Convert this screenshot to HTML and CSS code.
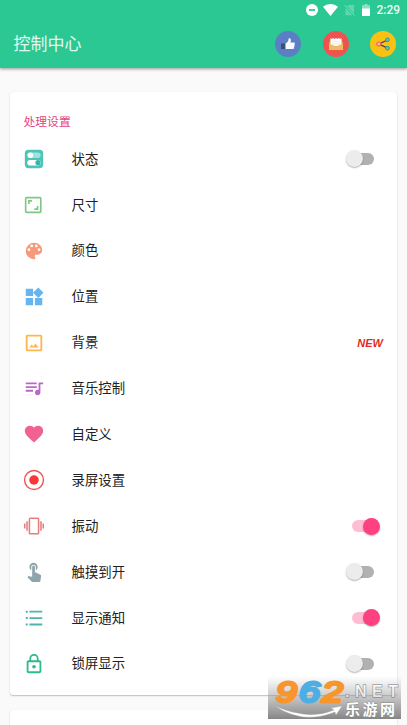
FILE: index.html
```html
<!DOCTYPE html>
<html lang="zh-CN">
<head>
<meta charset="utf-8">
<title>控制中心</title>
<link rel="stylesheet" href="styles.css">
</head>
<body>
<header class="appbar">
  <div class="status">
    <svg class="st-dnd" viewBox="0 0 12 12"><circle cx="6" cy="6" r="6" fill="#fff"/><path d="M3 5.100h6v1.800H3z" fill="#2cc893"/></svg>
    <svg class="st-wifi" viewBox="0 0 15 12"><path d="M7.500 12 0 2.700Q3.200 0 7.500 0T15 2.700z" fill="#fff"/></svg>
    <svg class="st-sim" viewBox="0 0 11 12"><path d="M4.500 1H10v8.500L3.300 2.200zM1.500 4l6.800 7.200H1.500z" fill="#62d5ae"/><path d="M.5 1l10 10.500" stroke="#7adfbd"/></svg>
    <svg class="st-bat" viewBox="0 0 8 12"><path d="M0 1.200h2.500V0h3v1.200H8V5H0z" fill="#8be2c5"/><path d="M0 4.500h8V12H0z" fill="#fff"/></svg>
    <span class="clock">2:29</span>
  </div>
  <div class="toolbar">
    <h1 class="title">控制中心</h1>
    <div class="actions">
      <span class="action like"><svg viewBox="0 0 26 26"><path d="M6 12.500h4.500V18H6z" fill="#3b4d78"/><path d="M10.500 12.500c2.300-1.100 3-2.700 3.200-5.200 2.700-.4 2.400 2.600 1.700 4.300h3.700c1 .3.900 1.300.4 1.700.5.700.3 1.300-.2 1.600.3.700 0 1.200-.4 1.500.2 1-.3 1.600-1.300 1.600h-7.100z" fill="#f7fafc"/></svg></span>
      <span class="action mail"><svg viewBox="0 0 26 26"><path d="M6 11l2-3h10l2 3v8H6z" fill="#d99d47"/><path d="M7.500 7l1.300 1 1.400-1 1.400 1L13 7l1.400 1 1.400-1 1.400 1 1.300-1v8h-11z" fill="#fff"/><path d="M9 11h8M9 13h8" stroke="#ead8cf" stroke-width=".6"/><path d="M6 12.500l7 3 7-3V19H6z" fill="#edbc62"/></svg></span>
      <span class="action share"><svg viewBox="0 0 26 26"><path d="M17.500 9L9 13l8.500 4.200" fill="none" stroke="#39464b" stroke-width="1.300"/><circle cx="8.800" cy="13" r="2" fill="#ffb6a0" stroke="#ed6560" stroke-width="1.200"/><circle cx="17.500" cy="8.800" r="1.900" fill="#65bdb1" stroke="#31989a"/><circle cx="17.500" cy="17.200" r="1.900" fill="#65bdb1" stroke="#31989a"/></svg></span>
    </div>
  </div>
</header>
<main class="content">
  <section class="card">
    <h2 class="heading">处理设置</h2>
    <ul class="list">
      <li class="row"><svg class="icon" viewBox="0 0 24 24"><rect x="2" y="2" width="20" height="20" rx="4" fill="#4fc3b8"/><rect x="4.700" y="5" width="14.600" height="6" rx="3" fill="#9ee2dc"/><circle cx="8" cy="8" r="3" fill="#fff"/><rect x="4.700" y="13" width="14.600" height="6" rx="3" fill="#fff"/><circle cx="16.300" cy="16" r="2.800" fill="#36b5ad"/></svg><span class="label">状态</span><span class="switch"></span></li>
      <li class="row"><svg class="icon left" viewBox="0 0 24 24" fill="none" stroke="#81c784" stroke-width="1.800"><rect x="4" y="4" width="16.500" height="16" rx="1"/><path d="M7.500 11V7.500H11M17 13v3.500h-3.500"/></svg><span class="label">尺寸</span></li>
      <li class="row"><svg class="icon" viewBox="0 0 24 24" fill="#f79a7b"><path d="M12 3a9 9 0 0 0 0 18c.830 0 1.500-.670 1.500-1.500 0-.390-.150-.740-.390-1.010-.230-.260-.380-.610-.380-.990 0-.830.670-1.500 1.500-1.500H16c2.760 0 5-2.240 5-5C21 6.580 16.970 3 12 3zm-5.500 9a1.500 1.500 0 1 1 0-3 1.500 1.500 0 0 1 0 3zm3-4a1.500 1.500 0 1 1 0-3 1.500 1.500 0 0 1 0 3zm5 0a1.500 1.500 0 1 1 0-3 1.500 1.500 0 0 1 0 3zm3 4a1.500 1.500 0 1 1 0-3 1.500 1.500 0 0 1 0 3z"/></svg><span class="label">颜色</span></li>
      <li class="row"><svg class="icon" viewBox="0 0 24 24" fill="#64b5f0"><path d="M13 13v8h8v-8h-8zM3 21h8v-8H3v8zM3 3v8h8V3H3zm13.660-1.310L11 7.340 16.660 13l5.660-5.660-5.660-5.650z"/></svg><span class="label">位置</span></li>
      <li class="row"><svg class="icon" viewBox="0 0 24 24" fill="#ffb74d"><path d="M19 5v14H5V5h14m0-2H5c-1.100 0-2 .9-2 2v14c0 1.100.9 2 2 2h14c1.100 0 2-.9 2-2V5c0-1.100-.9-2-2-2z"/><path d="M7 17l2.500-3.300 1.700 2 2.500-3.200L17 17z"/></svg><span class="label">背景</span><span class="new">NEW</span></li>
      <li class="row"><svg class="icon" viewBox="0 0 24 24" fill="#ba68c8"><path d="M15 6H3v2h12V6zm0 4H3v2h12v-2zM3 16h8v-2H3v2zM17 6v8.180c-.310-.110-.650-.180-1-.180-1.660 0-3 1.340-3 3s1.340 3 3 3 3-1.340 3-3V8h3V6h-5z"/></svg><span class="label">音乐控制</span></li>
      <li class="row"><svg class="icon" viewBox="0 0 24 24" fill="#f06292"><path d="M12 21.350l-1.450-1.320C5.400 15.360 2 12.280 2 8.500 2 5.420 4.420 3 7.500 3c1.740 0 3.410.810 4.500 2.090C13.090 3.810 14.760 3 16.500 3 19.580 3 22 5.420 22 8.500c0 3.780-3.400 6.860-8.550 11.540L12 21.350z"/></svg><span class="label">自定义</span></li>
      <li class="row"><svg class="icon" viewBox="0 0 24 24"><circle cx="12" cy="12" r="10.300" fill="none" stroke="#ef5350" stroke-width="1.500"/><circle cx="12" cy="12" r="5.200" fill="#fb3736"/></svg><span class="label">录屏设置</span></li>
      <li class="row"><svg class="icon" viewBox="0 0 24 24" fill="none" stroke="#e57f7f" stroke-width="1.700"><rect x="7" y="3.500" width="10" height="17" rx="1"/><path d="M4.400 6.800v10.400M1.900 9.200v5.600M19.600 6.800v10.400M22.100 9.200v5.600"/></svg><span class="label">振动</span><span class="switch on"></span></li>
      <li class="row"><svg class="icon" viewBox="0 0 24 24" fill="#90a4ae"><path d="M9 11.240V7.500a2.500 2.500 0 0 1 5 0v3.740c1.210-.810 2-2.180 2-3.740C16 5.010 13.990 3 11.500 3S7 5.010 7 7.500c0 1.560.790 2.930 2 3.740zm9.840 4.630l-4.540-2.260c-.170-.070-.350-.110-.540-.110H13v-6c0-.830-.670-1.500-1.500-1.500S10 6.670 10 7.500v10.740l-3.430-.720c-.430-.080-.740.010-1.030.300l-.790.800 4.940 4.940c.270.270.650.440 1.060.440h6.790c.750 0 1.330-.550 1.440-1.280l.750-5.270c.120-.800-.280-1.270-.890-1.580z" transform="translate(0 -1)"/></svg><span class="label">触摸到开</span><span class="switch"></span></li>
      <li class="row"><svg class="icon" viewBox="0 0 24 24" fill="#4db6ac"><path d="M3 4h2.200v2.200H3zM7 4.100h14v2H7zM3 11h2.200v2.200H3zM7 11.100h14v2H7zM3 18h2.200v2.200H3zM7 18.100h14v2H7z"/></svg><span class="label">显示通知</span><span class="switch on"></span></li>
      <li class="row"><svg class="icon" viewBox="0 0 24 24" fill="#2cbd8c"><path d="M18 8h-1V6c0-2.760-2.240-5-5-5S7 3.240 7 6v2H6c-1.100 0-2 .9-2 2v10c0 1.100.9 2 2 2h12c1.100 0 2-.9 2-2V10c0-1.100-.9-2-2-2zM8.900 6a3.100 3.100 0 0 1 6.200 0v2H8.900zM18 20H6V10h12z"/><circle cx="12" cy="15" r="2"/></svg><span class="label">锁屏显示</span><span class="switch"></span></li>
    </ul>
  </section>
  <section class="card next"></section>
</main>
<svg class="watermark" viewBox="0 0 133 43">
  <defs>
    <linearGradient id="shade" x2="0" y2="1"><stop stop-color="#999" stop-opacity="0"/><stop offset="1" stop-color="#858585"/></linearGradient>
    <linearGradient id="silver" x2="0" y2="1"><stop stop-color="#fff"/><stop offset="1" stop-color="#ddd"/></linearGradient>
  </defs>
  <path d="M0 0h133v43H0z" fill="url(#shade)"/>
  <path d="M7 30q34 15 59 4l-3-2 11-2-6 9-1-3Q35 49 7 30z" fill="#fff" stroke="#aaa" stroke-width=".4"/>
  <g class="digits">
    <text x="8" y="25.500" textLength="21" lengthAdjust="spacingAndGlyphs" fill="#f7962e" stroke="#f7962e">9</text>
    <text x="31" y="25.500" textLength="21" lengthAdjust="spacingAndGlyphs" fill="#4eade3" stroke="#4eade3">6</text>
    <text x="54" y="25.500" textLength="21" lengthAdjust="spacingAndGlyphs" fill="#f7962e" stroke="#f7962e">2</text>
  </g>
  <text class="net" x="77" y="20.500" textLength="53" lengthAdjust="spacing">.NET</text>
  <text class="site" x="77" y="38.500" textLength="50">乐游网</text>
</svg>
</body>
</html>
```
FILE: styles.css
```css
* { box-sizing: border-box; }
body {
  margin: 0;
  width: 407px;
  height: 725px;
  overflow: hidden;
  background: #fafafa;
  font-family: Roboto, "Noto Sans CJK SC", sans-serif;
}
.appbar {
  position: relative;
  height: 68px;
  background: #2cc893;
  box-shadow: 0 1px 3px rgba(0, 0, 0, .4);
}
.status {
  display: flex;
  align-items: center;
  justify-content: flex-end;
  height: 20px;
  padding-right: 7.500px;
}
.st-dnd { width: 12px; height: 12px; margin-right: 5px; }
.st-wifi { width: 15px; height: 12px; margin-right: 6px; }
.st-sim { width: 11px; height: 12px; margin-right: 7px; }
.st-bat { width: 8px; height: 12px; margin-right: 6.500px; }
.clock { color: #e6f9f2; font-size: 12px; font-weight: 500; line-height: 20px; width: 23px; white-space: nowrap; }
.toolbar {
  display: flex;
  align-items: center;
  justify-content: space-between;
  height: 48px;
  padding: 0 11px 0 13.500px;
}
.title { margin: 0; color: #e3f9f0; font-size: 17px; font-weight: 400; line-height: 24px; }
.actions { display: flex; gap: 21.500px; }
.action { width: 26px; height: 26px; border-radius: 50%; }
.action svg { display: block; width: 26px; height: 26px; }
.like { background: #5b7ec5; }
.mail { background: #ef5350; }
.share { background: #fbc112; }
.content { padding: 24px 10px 0; }
.card {
  height: 603px;
  padding-top: 20px;
  border-radius: 3px;
  background: #fff;
  box-shadow: 0 1px 1.500px rgba(0, 0, 0, .24), 0 0 1px rgba(0, 0, 0, .1);
}
.next { height: 15px; margin-top: 15px; padding: 0; border-radius: 3px 3px 0 0; }
.heading { margin: 0 13.500px; color: #e2457f; font-size: 11.800px; font-weight: 400; line-height: 20px; height: 24px; }
.list { margin: 0; padding: 0; list-style: none; }
.row { display: flex; align-items: center; height: 45.900px; padding: 0 14px 0 13px; }
.icon { flex: none; width: 22px; height: 22px; }
.icon.left { margin-left: -1px; margin-right: 1px; }
.label { flex: 1; margin-left: 26.500px; padding-top: 1.500px; color: #212121; font-size: 13.400px; line-height: 20px; }
.new { color: #e52b25; font: italic bold 11px/16px "Liberation Sans", sans-serif; }
.switch {
  display: flex;
  align-items: center;
  width: 27px;
  height: 12px;
  margin-right: 9px;
  border-radius: 6px;
  background: #b1b1b1;
}
.switch::before {
  content: "";
  width: 17px;
  height: 17px;
  flex: none;
  margin-left: -1.500px;
  border-radius: 50%;
  background: #ececec;
  box-shadow: 0 1px 1.500px rgba(0, 0, 0, .3);
}
.switch.on { margin-right: 4px; background: #ffbdd3; }
.switch.on::before { margin-left: 11px; background: #ff4081; }
.watermark { position: absolute; left: 268px; top: 676px; width: 133px; height: 43px; }
.digits { font: italic 30px "Liberation Sans", sans-serif; stroke-width: 3px; stroke-linejoin: round; }
.net { font: bold 16px "Liberation Sans", sans-serif; fill: url(#silver); stroke: #777; stroke-width: 1px; paint-order: stroke; }
.site { font: bold 15px/15px "Noto Sans CJK SC", sans-serif; fill: #fff; stroke: #888; stroke-width: .8px; paint-order: stroke; }
```
